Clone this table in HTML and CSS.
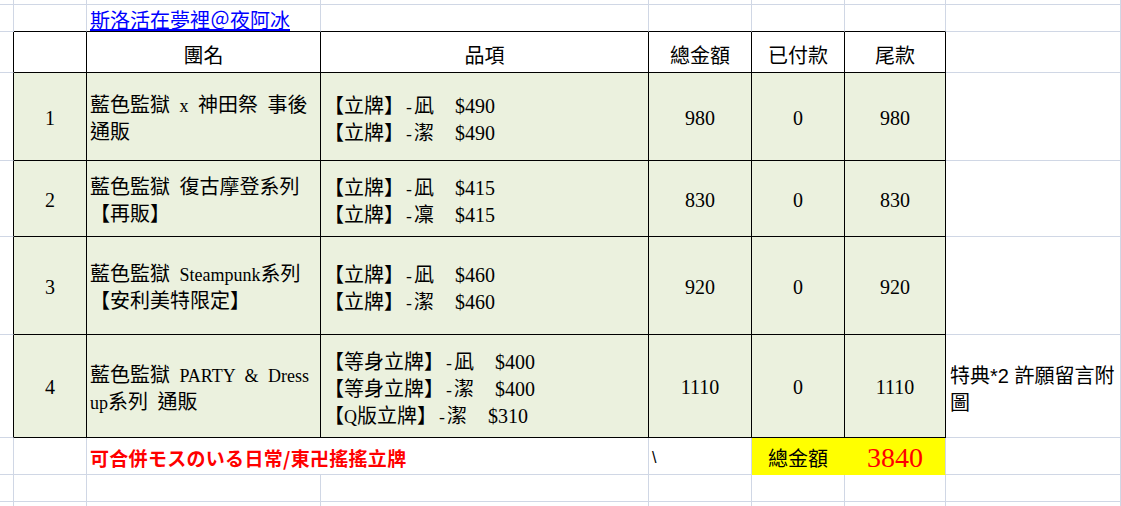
FILE: index.html
```html
<!DOCTYPE html>
<html lang="zh-Hant">
<head>
<meta charset="utf-8">
<title>Sheet</title>
<link rel="stylesheet" href="styles.css">
</head>
<body>
<div class="sheet">
  <!-- row A -->
  <div class="c"></div><div class="c"></div><div class="c"></div><div class="c"></div>
  <div class="c"></div><div class="c"></div><div class="c"></div><div class="c"></div>

  <!-- row B -->
  <div class="c"></div>
  <div class="c bb"></div>
  <div class="c bb txt"><a class="link" href="#">斯洛活在夢裡＠夜阿冰</a></div>
  <div class="c bb"></div>
  <div class="c bb"></div>
  <div class="c bb"></div>
  <div class="c bb"></div>
  <div class="c"></div>

  <!-- header -->
  <div class="c br"></div>
  <div class="c t"></div>
  <div class="c t ctr head">團名</div>
  <div class="c t ctr head">品項</div>
  <div class="c t ctr head">總金額</div>
  <div class="c t ctr head">已付款</div>
  <div class="c t ctr head">尾款</div>
  <div class="c"></div>

  <!-- row 1 -->
  <div class="c br"></div>
  <div class="c t g ctr n">1</div>
  <div class="c t g txt"><div class="lines">
    <div class="ln">藍色監獄<span class="m"> x </span>神田祭<span class="m"> </span>事後</div>
    <div class="ln">通販</div>
  </div></div>
  <div class="c t g txt"><div class="lines items">
    <div class="ln">【立牌】<span class="h">-</span>凪<span class="p">$490</span></div>
    <div class="ln">【立牌】<span class="h">-</span>潔<span class="p">$490</span></div>
  </div></div>
  <div class="c t g ctr n">980</div>
  <div class="c t g ctr n">0</div>
  <div class="c t g ctr n">980</div>
  <div class="c"></div>

  <!-- row 2 -->
  <div class="c br"></div>
  <div class="c t g ctr n">2</div>
  <div class="c t g txt"><div class="lines">
    <div class="ln">藍色監獄<span class="m"> </span>復古摩登系列</div>
    <div class="ln">【再販】</div>
  </div></div>
  <div class="c t g txt"><div class="lines items">
    <div class="ln">【立牌】<span class="h">-</span>凪<span class="p">$415</span></div>
    <div class="ln">【立牌】<span class="h">-</span>凜<span class="p">$415</span></div>
  </div></div>
  <div class="c t g ctr n">830</div>
  <div class="c t g ctr n">0</div>
  <div class="c t g ctr n">830</div>
  <div class="c"></div>

  <!-- row 3 -->
  <div class="c br"></div>
  <div class="c t g ctr n">3</div>
  <div class="c t g txt"><div class="lines">
    <div class="ln">藍色監獄<span class="m"> Steampunk</span>系列</div>
    <div class="ln">【安利美特限定】</div>
  </div></div>
  <div class="c t g txt"><div class="lines items">
    <div class="ln">【立牌】<span class="h">-</span>凪<span class="p">$460</span></div>
    <div class="ln">【立牌】<span class="h">-</span>潔<span class="p">$460</span></div>
  </div></div>
  <div class="c t g ctr n">920</div>
  <div class="c t g ctr n">0</div>
  <div class="c t g ctr n">920</div>
  <div class="c"></div>

  <!-- row 4 -->
  <div class="c br"></div>
  <div class="c t g ctr n">4</div>
  <div class="c t g txt"><div class="lines">
    <div class="ln">藍色監獄<span class="m"> PARTY &amp; Dress</span></div>
    <div class="ln"><span class="m">up</span>系列<span class="m"> </span>通販</div>
  </div></div>
  <div class="c t g txt"><div class="lines items">
    <div class="ln">【等身立牌】<span class="h">-</span>凪<span class="p">$400</span></div>
    <div class="ln">【等身立牌】<span class="h">-</span>潔<span class="p">$400</span></div>
    <div class="ln">【<span class="m">Q</span>版立牌】<span class="h">-</span>潔<span class="p">$310</span></div>
  </div></div>
  <div class="c t g ctr n">1110</div>
  <div class="c t g ctr n">0</div>
  <div class="c t g ctr n">1110</div>
  <div class="c txt note"><div class="lines note-lines">
    <div class="ln">特典<span class="s">*2 </span>許願留言附</div>
    <div class="ln">圖</div>
  </div></div>

  <!-- total row -->
  <div class="c"></div>
  <div class="c"></div>
  <div class="c txt wide"><span class="red">可合併モスのいる日常/東卍搖搖立牌</span></div>
  <div class="c txt"><span class="bs">\</span></div>
  <div class="c y y-mid ctr">總金額</div>
  <div class="c y ctr"><span class="total">3840</span></div>
  <div class="c"></div>

  <!-- row I -->
  <div class="c"></div><div class="c"></div><div class="c"></div><div class="c"></div>
  <div class="c"></div><div class="c"></div><div class="c"></div><div class="c"></div>

  <!-- row J -->
  <div class="c"></div><div class="c"></div><div class="c"></div><div class="c"></div>
  <div class="c"></div><div class="c"></div><div class="c"></div><div class="c"></div>
</div>
</body>
</html>
```

FILE: styles.css
```css
html, body {
  margin: 0;
  padding: 0;
  background: #ffffff;
  overflow: hidden;
}

body {
  font-family: "Noto Sans CJK TC", "Noto Sans CJK JP", sans-serif;
  font-size: 20px;
  color: #000;
}

.sheet {
  display: grid;
  grid-template-columns: 14px 73px 234px 328px 103px 93px 101px 175px;
  grid-template-rows: 5px 27px 41px 88px 76px 98px 103px 37px 27px 30px;
  width: 1121px;
  height: 506px;
  overflow: hidden;
}

.c {
  box-sizing: border-box;
  min-width: 0;
  border-right: 1px solid #d0d7e5;
  border-bottom: 1px solid #d0d7e5;
  display: flex;
  align-items: center;
  white-space: nowrap;
  line-height: 27px;
}

.bb { border-bottom-color: #000; }
.br { border-right-color: #000; }
.t { border-right-color: #000; border-bottom-color: #000; }
.g { background: #ebf1de; }

.ctr { justify-content: center; }
.txt { padding-left: 3px; }

.head { padding-top: 4px; }

.n {
  font-family: "Liberation Serif", serif;
  font-size: 20px;
  padding-top: 3px;
}

.lines {
  display: flex;
  flex-direction: column;
  padding-top: 1px;
}

.items { padding-top: 3px; }

.ln {
  height: 27px;
  line-height: 27px;
  overflow: visible;
}

.note { padding-left: 4px; }
.note-lines { padding-top: 4px; }

.m {
  font-family: "Liberation Serif", serif;
  font-size: 18px;
  word-spacing: 5px;
}

.h {
  font-family: "Liberation Mono", monospace;
  font-size: 16.67px;
}

.s {
  font-family: "Liberation Sans", sans-serif;
  font-size: 20px;
}

.p {
  font-family: "Liberation Serif", serif;
  margin-left: 21px;
}

.link {
  color: #0000ff;
  text-decoration: underline;
  line-height: 24px;
  padding-top: 3px;
}

.wide { grid-column: span 2; }

.red {
  color: #ff0000;
  font-weight: bold;
  font-size: 19px;
  letter-spacing: 0.3px;
  padding-top: 2px;
}

.bs {
  font-family: "Liberation Sans", sans-serif;
  font-size: 16px;
  padding-top: 3px;
}

.y {
  background: #ffff00;
  border-bottom-color: #ffff00;
  padding-top: 3px;
}
.y-mid { border-right-color: #ffff00; }

.total {
  font-family: "Liberation Serif", serif;
  font-size: 28px;
  color: #ff0000;
  line-height: 30px;
}
```
